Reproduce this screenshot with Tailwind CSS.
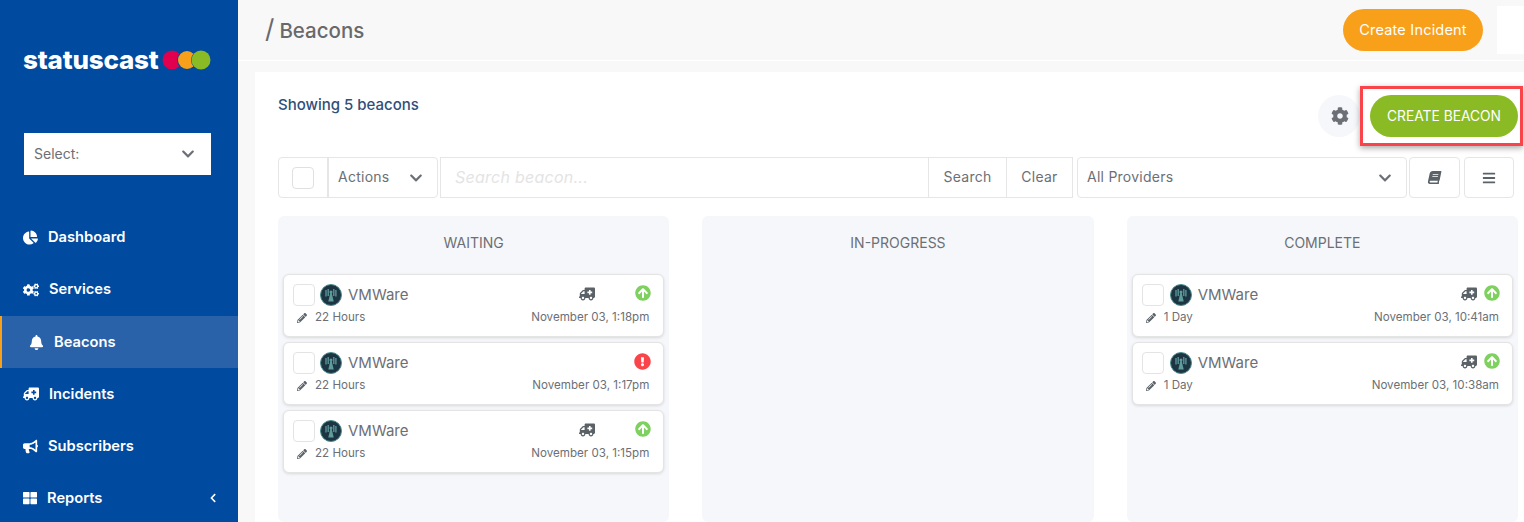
<!DOCTYPE html>
<html lang="en">
<head>
  <meta charset="UTF-8" />
  <title>StatusCast - Beacons</title>
  <script src="https://cdn.jsdelivr.net/npm/@tailwindcss/browser@4"></script>
</head>
<body class="bg-[#f8f8f8] font-['Inter',sans-serif] text-[#6c6f75] overflow-hidden">
  <!-- icon sprite -->
  <svg class="hidden">
    <symbol id="chev-down" viewBox="0 0 448 512"><path d="M207.029 381.476L12.686 187.132c-9.373-9.373-9.373-24.569 0-33.941l22.667-22.667c9.357-9.357 24.522-9.375 33.901-.04L224 284.505l154.745-154.021c9.379-9.335 24.544-9.317 33.901.04l22.667 22.667c9.373 9.373 9.373 24.569 0 33.941L240.971 381.476c-9.373 9.372-24.569 9.372-33.942 0z"/></symbol>
    <symbol id="chev-left" viewBox="0 0 320 512"><path d="M34.52 239.03L228.87 44.69c9.37-9.37 24.57-9.37 33.94 0l22.67 22.67c9.36 9.36 9.37 24.52.04 33.9L131.49 256l154.02 154.75c9.34 9.38 9.32 24.54-.04 33.9l-22.67 22.67c-9.37 9.37-24.57 9.37-33.94 0L34.52 272.97c-9.37-9.37-9.37-24.57 0-33.94z"/></symbol>
    <symbol id="pie" viewBox="0 0 544 512"><path d="M527.79 288H290.5l158.03 158.03c6.04 6.04 15.98 6.53 22.19.68 38.7-36.46 65.32-85.61 73.13-140.86 1.34-9.46-6.51-17.85-16.06-17.85zm-15.83-64.8C503.72 103.74 408.26 8.28 288.8.04 279.68-.59 272 7.1 272 16.24V240h223.77c9.14 0 16.82-7.68 16.19-16.8zM224 288V50.71c0-9.55-8.39-17.4-17.84-16.06C86.99 51.49-4.1 155.6.14 280.37 4.5 408.51 114.83 513.59 243.03 511.98c50.4-.63 96.97-16.87 135.26-44.03 7.9-5.6 8.42-17.23 1.57-24.08L224 288z"/></symbol>
    <symbol id="cogs" viewBox="0 0 640 512"><path d="M512.1 191l-8.2 14.3c-3 5.3-9.4 7.5-15.1 5.4-11.8-4.4-22.6-10.7-32.1-18.6-4.6-3.8-5.8-10.5-2.8-15.7l8.2-14.3c-6.9-8-12.3-17.3-15.9-27.4h-16.5c-6 0-11.2-4.3-12.2-10.3-2-12-2.1-24.6 0-37.1 1-6 6.2-10.4 12.2-10.4h16.5c3.6-10.1 9-19.4 15.9-27.4l-8.2-14.3c-3-5.2-1.9-11.9 2.8-15.7 9.5-7.9 20.4-14.2 32.1-18.6 5.7-2.1 12.1.1 15.1 5.4l8.2 14.3c10.5-1.9 21.2-1.9 31.7 0L552 6.3c3-5.3 9.4-7.5 15.1-5.4 11.8 4.4 22.6 10.7 32.1 18.6 4.6 3.8 5.8 10.5 2.8 15.7l-8.2 14.3c6.9 8 12.3 17.3 15.9 27.4h16.5c6 0 11.2 4.3 12.2 10.3 2 12 2.1 24.6 0 37.1-1 6-6.2 10.4-12.2 10.4h-16.5c-3.6 10.1-9 19.4-15.9 27.4l8.2 14.3c3 5.2 1.9 11.9-2.8 15.7-9.5 7.9-20.4 14.2-32.1 18.6-5.7 2.1-12.1-.1-15.1-5.4l-8.2-14.3c-10.4 1.9-21.2 1.9-31.7 0zm-10.5-58.8c38.5 29.6 82.4-14.3 52.8-52.8-38.5-29.7-82.4 14.3-52.8 52.8zM386.3 286.1l33.7 16.8c10.1 5.8 14.5 18.1 10.5 29.1-8.9 24.2-26.4 46.4-42.6 65.8-7.4 8.9-20.2 11.1-30.3 5.3l-29.1-16.8c-16 13.7-34.6 24.6-54.9 31.7v33.6c0 11.6-8.3 21.6-19.7 23.6-24.6 4.2-50.4 4.4-75.9 0-11.5-2-20-11.9-20-23.6V418c-20.3-7.2-38.9-18-54.9-31.7L74 403c-10 5.8-22.9 3.6-30.3-5.3-16.2-19.4-33.3-41.6-42.2-65.7-4-10.9.4-23.2 10.5-29.1l33.3-16.8c-3.9-20.9-3.9-42.4 0-63.4L12 205.8c-10.1-5.8-14.6-18.1-10.5-29 8.9-24.2 26-46.4 42.2-65.8 7.4-8.9 20.2-11.1 30.3-5.3l29.1 16.8c16-13.7 34.6-24.6 54.9-31.7V57.1c0-11.5 8.2-21.5 19.6-23.5 24.6-4.2 50.5-4.4 76-.1 11.5 2 20 11.9 20 23.6v33.6c20.3 7.2 38.9 18 54.9 31.7l29.1-16.8c10-5.8 22.9-3.6 30.3 5.3 16.2 19.4 33.2 41.6 42.1 65.8 4 10.9.1 23.2-10 29.1l-33.7 16.8c3.9 21 3.9 42.5 0 63.5zm-117.6 21.1c59.2-77-28.7-164.9-105.7-105.7-59.2 77 28.7 164.9 105.7 105.7zm243.4 182.7l-8.2 14.3c-3 5.3-9.4 7.5-15.1 5.4-11.8-4.4-22.6-10.7-32.1-18.6-4.6-3.8-5.8-10.5-2.8-15.7l8.2-14.3c-6.9-8-12.3-17.3-15.9-27.4h-16.5c-6 0-11.2-4.3-12.2-10.3-2-12-2.1-24.6 0-37.1 1-6 6.2-10.4 12.2-10.4h16.5c3.6-10.1 9-19.4 15.9-27.4l-8.2-14.3c-3-5.2-1.9-11.9 2.8-15.7 9.5-7.9 20.4-14.2 32.1-18.6 5.7-2.1 12.1.1 15.1 5.4l8.2 14.3c10.5-1.9 21.2-1.9 31.7 0l8.2-14.3c3-5.3 9.4-7.5 15.1-5.4 11.8 4.4 22.6 10.7 32.1 18.6 4.6 3.8 5.8 10.5 2.8 15.7l-8.2 14.3c6.9 8 12.3 17.3 15.9 27.4h16.5c6 0 11.2 4.3 12.2 10.3 2 12 2.1 24.6 0 37.1-1 6-6.2 10.4-12.2 10.4h-16.5c-3.6 10.1-9 19.4-15.9 27.4l8.2 14.3c3 5.2 1.9 11.9-2.8 15.7-9.5 7.9-20.4 14.2-32.1 18.6-5.7 2.1-12.1-.1-15.1-5.4l-8.2-14.3c-10.4 1.9-21.2 1.9-31.7 0zM501.6 431c38.5 29.6 82.4-14.3 52.8-52.8-38.5-29.6-82.4 14.3-52.8 52.8z"/></symbol>
    <symbol id="bell" viewBox="0 0 448 512"><path d="M224 512c35.32 0 63.97-28.65 63.97-64H160.03c0 35.35 28.65 64 63.97 64zm215.39-149.71c-19.32-20.76-55.47-51.99-55.47-154.29 0-77.7-54.48-139.9-127.94-155.16V32c0-17.67-14.32-32-31.98-32s-31.98 14.33-31.98 32v20.84C118.56 68.1 64.08 130.3 64.08 208c0 102.3-36.15 133.53-55.47 154.29-6 6.45-8.66 14.16-8.61 21.71.11 16.4 12.98 32 32.1 32h383.8c19.12 0 32-15.6 32.1-32 .05-7.55-2.61-15.27-8.61-21.71z"/></symbol>
    <symbol id="ambulance" viewBox="0 0 640 512"><path d="M624 352h-16V243.9c0-12.7-5.1-24.9-14.1-33.9L494 110.1c-9-9-21.2-14.1-33.9-14.1H416V48c0-26.5-21.5-48-48-48H48C21.5 0 0 21.5 0 48v320c0 26.5 21.5 48 48 48h16c0 53 43 96 96 96s96-43 96-96h128c0 53 43 96 96 96s96-43 96-96h48c8.8 0 16-7.2 16-16v-32c0-8.8-7.2-16-16-16zM160 464c-26.5 0-48-21.5-48-48s21.5-48 48-48 48 21.5 48 48-21.5 48-48 48zm144-248c0 4.4-3.6 8-8 8h-56v56c0 4.4-3.6 8-8 8h-48c-4.4 0-8-3.6-8-8v-56h-56c-4.4 0-8-3.6-8-8v-48c0-4.4 3.6-8 8-8h56v-56c0-4.4 3.6-8 8-8h48c4.4 0 8 3.6 8 8v56h56c4.4 0 8 3.6 8 8v48zm176 248c-26.5 0-48-21.5-48-48s21.5-48 48-48 48 21.5 48 48-21.5 48-48 48zm80-208H416V144h44.1l99.9 99.9V256z"/></symbol>
    <symbol id="bullhorn" viewBox="0 0 576 512"><path d="M576 240c0-23.63-12.95-44.04-32-55.12V32.01C544 23.26 537.02 0 512 0c-7.12 0-14.19 2.38-19.98 7.02l-85.03 68.03C364.28 109.19 310.66 128 256 128H64c-35.35 0-64 28.65-64 64v96c0 35.35 28.65 64 64 64h33.7c-1.39 10.48-2.18 21.14-2.18 32 0 39.77 9.26 77.35 25.56 110.94 5.19 10.69 16.52 17.06 28.4 17.06h74.28c26.05 0 41.69-29.84 25.9-50.56-16.4-21.52-26.15-48.36-26.15-77.44 0-11.11 1.62-21.79 4.41-32H256c54.66 0 108.28 18.81 150.98 52.95l85.03 68.03a32.023 32.023 0 0 0 19.98 7.02c24.92 0 32-22.78 32-32V295.13C563.05 284.04 576 263.63 576 240zm-96 141.42l-33.05-26.44C392.95 311.78 325.12 288 256 288v-96c69.12 0 136.95-23.78 190.95-66.98L480 98.58v282.84z"/></symbol>
    <symbol id="grid" viewBox="0 0 512 512"><path d="M296 32h192c13.255 0 24 10.745 24 24v160c0 13.255-10.745 24-24 24H296c-13.255 0-24-10.745-24-24V56c0-13.255 10.745-24 24-24zm-80 0H24C10.745 32 0 42.745 0 56v160c0 13.255 10.745 24 24 24h192c13.255 0 24-10.745 24-24V56c0-13.255-10.745-24-24-24zM0 296v160c0 13.255 10.745 24 24 24h192c13.255 0 24-10.745 24-24V296c0-13.255-10.745-24-24-24H24c-13.255 0-24 10.745-24 24zm296 184h192c13.255 0 24-10.745 24-24V296c0-13.255-10.745-24-24-24H296c-13.255 0-24 10.745-24 24v160c0 13.255 10.745 24 24 24z"/></symbol>
    <symbol id="cog" viewBox="0 0 512 512"><path d="M487.4 315.7l-42.6-24.6c4.3-23.2 4.3-47 0-70.2l42.6-24.6c4.9-2.8 7.1-8.6 5.5-14-11.1-35.6-30-67.8-54.7-94.6-3.8-4.1-10-5.1-14.8-2.3L380.8 110c-17.9-15.4-38.5-27.3-60.8-35.1V25.8c0-5.6-3.9-10.5-9.4-11.7-36.7-8.2-74.3-7.8-109.2 0-5.5 1.2-9.4 6.1-9.4 11.7V75c-22.2 7.9-42.8 19.8-60.8 35.1L88.7 85.5c-4.9-2.8-11-1.9-14.8 2.3-24.7 26.7-43.6 58.9-54.7 94.6-1.7 5.4.6 11.2 5.5 14L67.3 221c-4.3 23.2-4.3 47 0 70.2l-42.6 24.6c-4.9 2.8-7.1 8.6-5.5 14 11.1 35.6 30 67.8 54.7 94.6 3.8 4.1 10 5.1 14.8 2.3l42.6-24.6c17.9 15.4 38.5 27.3 60.8 35.1v49.2c0 5.6 3.9 10.5 9.4 11.7 36.7 8.2 74.3 7.8 109.2 0 5.5-1.2 9.4-6.1 9.4-11.7v-49.2c22.2-7.9 42.8-19.8 60.8-35.1l42.6 24.6c4.9 2.8 11 1.9 14.8-2.3 24.7-26.7 43.6-58.9 54.7-94.6 1.5-5.5-.7-11.3-5.6-14.1zM256 336c-44.1 0-80-35.9-80-80s35.9-80 80-80 80 35.9 80 80-35.9 80-80 80z"/></symbol>
    <symbol id="book" viewBox="0 0 448 512"><path d="M448 360V24c0-13.3-10.7-24-24-24H96C43 0 0 43 0 96v320c0 53 43 96 96 96h328c13.3 0 24-10.7 24-24v-16c0-7.5-3.5-14.3-8.9-18.7-4.2-15.4-4.2-59.3 0-74.7 5.4-4.3 8.9-11.1 8.9-18.6zM128 134c0-3.3 2.7-6 6-6h212c3.3 0 6 2.7 6 6v20c0 3.3-2.7 6-6 6H134c-3.3 0-6-2.7-6-6v-20zm0 64c0-3.3 2.7-6 6-6h212c3.3 0 6 2.7 6 6v20c0 3.3-2.7 6-6 6H134c-3.3 0-6-2.7-6-6v-20zm253.4 250H96c-17.7 0-32-14.3-32-32 0-17.6 14.4-32 32-32h285.4c-1.9 17.1-1.9 46.9 0 64z"/></symbol>
    <symbol id="bars" viewBox="0 0 448 512"><path d="M16 132h416c8.837 0 16-7.163 16-16V76c0-8.837-7.163-16-16-16H16C7.163 60 0 67.163 0 76v40c0 8.837 7.163 16 16 16zm0 160h416c8.837 0 16-7.163 16-16v-40c0-8.837-7.163-16-16-16H16c-8.837 0-16 7.163-16 16v40c0 8.837 7.163 16 16 16zm0 160h416c8.837 0 16-7.163 16-16v-40c0-8.837-7.163-16-16-16H16c-8.837 0-16 7.163-16 16v40c0 8.837 7.163 16 16 16z"/></symbol>
    <symbol id="pencil" viewBox="0 0 512 512"><path d="M497.9 142.1l-46.1 46.1c-4.7 4.7-12.3 4.7-17 0l-111-111c-4.7-4.7-4.7-12.3 0-17l46.1-46.1c18.7-18.7 49.1-18.7 67.9 0l60.1 60.1c18.8 18.7 18.8 49.1 0 67.9zM284.2 99.8L21.6 362.4.4 483.9c-2.9 16.4 11.4 30.6 27.8 27.8l121.5-21.3 262.6-262.6c4.7-4.7 4.7-12.3 0-17l-111-111c-4.8-4.7-12.4-4.7-17.1 0zM124.1 339.9c-5.5-5.5-5.5-14.3 0-19.8l154-154c5.5-5.5 14.3-5.5 19.8 0s5.5 14.3 0 19.8l-154 154c-5.5 5.5-14.3 5.5-19.8 0zM88 424h48v36.3l-64.5 11.3-31.1-31.1L51.7 376H88v48z"/></symbol>
    <symbol id="arrow-up" viewBox="0 0 512 512"><path d="M8 256C8 119 119 8 256 8s248 111 248 248-111 248-248 248S8 393 8 256zm143.6 28.9l72.4-75.5V392c0 13.3 10.7 24 24 24h16c13.3 0 24-10.7 24-24V209.4l72.4 75.5c9.3 9.7 24.8 9.9 34.3.4l10.9-11c9.4-9.4 9.4-24.6 0-33.9L273 107.7c-9.4-9.4-24.6-9.4-33.9 0L106.3 240.4c-9.4 9.4-9.4 24.6 0 33.9l10.9 11c9.6 9.5 25.1 9.3 34.4-.4z"/></symbol>
    <symbol id="alert" viewBox="0 0 512 512"><path d="M504 256c0 136.997-111.043 248-248 248S8 392.997 8 256C8 119.083 119.043 8 256 8s248 111.083 248 248zm-248 50c-25.405 0-46 20.595-46 46s20.595 46 46 46 46-20.595 46-46-20.595-46-46-46zm-43.673-165.346l7.418 136c.347 6.364 5.609 11.346 11.982 11.346h48.546c6.373 0 11.635-4.982 11.982-11.346l7.418-136c.375-6.874-5.098-12.654-11.982-12.654h-63.383c-6.884 0-12.356 5.78-11.981 12.654z"/></symbol>
    <symbol id="vmware" viewBox="0 0 22 22"><circle cx="11" cy="11" r="10.5" fill="#1d3443" stroke="#4f8f8f" stroke-width="1"/><path d="M10.3 9h1.4l2 8.5h-5.4z" fill="#5f9c9c"/><path d="M6 6v6.5M8.2 5v7M15.9 6v6.5M13.8 5v7" stroke="#5f9c9c" stroke-width="1.3" fill="none"/><circle cx="11" cy="8" r="1.5" fill="#5f9c9c"/></symbol>
  </svg>

  <div class="flex h-[522px] w-[1524px]">
    <!-- Sidebar -->
    <aside class="w-[238px] shrink-0 bg-[#004a9f] text-white">
      <div class="flex h-[120px] items-center pl-6">
        <span class="-ml-[1px] text-[26px] font-extrabold tracking-[-0.2px] leading-none">statuscast</span>
        <svg class="ml-[4px] h-5 w-[49px]" viewBox="0 0 49 20">
          <circle cx="10" cy="10" r="9.5" fill="#e0004d"/>
          <circle cx="25" cy="10" r="10" fill="#004a9f"/>
          <circle cx="25" cy="10" r="9" fill="#f9a01b"/>
          <circle cx="39" cy="10" r="10" fill="#004a9f"/>
          <circle cx="39" cy="10" r="9.5" fill="#8abb24"/>
        </svg>
      </div>
      <div class="ml-6 mt-[13px] flex h-[42px] w-[187px] items-center justify-between bg-white pl-[10px] pr-[16px] text-sm text-[#6c6f75]">
        <span>Select:</span>
        <svg class="size-[14px] fill-[#6c6f75]"><use href="#chev-down"/></svg>
      </div>
      <nav class="mt-[36px] text-[14.7px] font-semibold">
        <a class="flex h-[52px] items-center pl-[23px]"><svg class="mr-[10px] size-[15px] fill-white"><use href="#pie"/></svg>Dashboard</a>
        <a class="flex h-[53px] items-center pl-[23px]"><svg class="mr-[10px] size-[16px] fill-white"><use href="#cogs"/></svg>Services</a>
        <a class="flex h-[52px] items-center border-l-2 border-[#f9a01b] bg-[#2a62a9] pl-[27px]"><svg class="mr-[10px] size-[15px] fill-white"><use href="#bell"/></svg>Beacons</a>
        <a class="flex h-[52px] items-center pl-[23px]"><svg class="mr-[10px] size-[16px] -scale-x-100 fill-white"><use href="#ambulance"/></svg>Incidents</a>
        <a class="flex h-[52px] items-center pl-[23px]"><svg class="mr-[10px] size-[15px] fill-white"><use href="#bullhorn"/></svg>Subscribers</a>
        <a class="flex h-[52px] items-center pl-[23px]"><svg class="mr-[10px] size-[14px] fill-white"><use href="#grid"/></svg>Reports<svg class="ml-auto mr-[20px] size-[10px] fill-white"><use href="#chev-left"/></svg></a>
      </nav>
    </aside>

    <!-- Main -->
    <main class="min-w-0 flex-1">
      <header class="flex h-[61px] items-center border-b border-white pl-[27px]">
        <h1 class="pb-[4px] text-[20.5px] font-medium text-[#68696c]"><span class="mr-[5px] text-[26px] font-normal">/</span>Beacons</h1>
        <button class="ml-auto flex h-[42px] w-[140px] items-center justify-center rounded-full bg-[#f9a01b] text-[14.5px] tracking-[0.2px] text-white">Create Incident</button>
        <div class="ml-[14px] h-[48px] w-[27px] bg-white"></div>
      </header>

      <section class="relative ml-[17px] mt-[11px] h-[450px] bg-white pl-[23px] pr-[6px]">
        <div class="flex h-[85px] items-start">
          <p class="mt-[22px] text-[15px] font-medium text-[#2f5079]">Showing 5 beacons</p>
          <button class="ml-auto mt-[23px] flex size-[42px] items-center justify-center rounded-full bg-[#f5f7fa] pl-[2px]"><svg class="size-[18px] fill-[#6c6f75]"><use href="#cog"/></svg></button>
          <button class="ml-[10px] mt-[23px] h-[42px] w-[148px] rounded-full bg-[#8abb24] text-[13.8px] text-white">CREATE BEACON</button>
        </div>
        <!-- red highlight round the create button -->
        <div class="absolute left-[1105px] top-[14px] h-[60px] w-[163px] border-[3px] border-[#f94449] shadow-[0_2px_6px_rgba(0,0,0,0.35)]"></div>

        <div class="flex h-[41px] text-sm tracking-[0.25px]">
          <div class="flex w-[160px] rounded border border-[#e6e6e6] bg-white">
            <div class="flex w-[50px] items-center justify-center border-r-2 border-[#e6e6e6]"><span class="size-[22px] rounded border border-[#e0e0e0]"></span></div>
            <div class="flex flex-1 items-center justify-between pb-[2px] pl-[9px] pr-[14px]">Actions<svg class="mt-[2px] size-[14px] fill-[#6c6f75]"><use href="#chev-down"/></svg></div>
          </div>
          <div class="ml-[2px] flex w-[633px] border border-[#e6e6e6]">
            <div class="flex flex-1 items-center pb-[1px] pl-[14px] text-base italic text-[#e4e4e4]">Search beacon...</div>
            <div class="flex w-[78px] items-center justify-center border-l border-[#e6e6e6] pb-[2px]">Search</div>
            <div class="flex w-[66px] items-center justify-center border-l border-[#e6e6e6] pb-[2px]">Clear</div>
          </div>
          <div class="ml-[4px] flex w-[330px] items-center justify-between rounded border border-[#e6e6e6] pb-[2px] pl-[9px] pr-[14px]">All Providers<svg class="mt-[2px] size-[14px] fill-[#6c6f75]"><use href="#chev-down"/></svg></div>
          <div class="ml-[2px] flex w-[51px] items-center justify-center rounded border border-[#e6e6e6]"><svg class="size-[13px] -skew-x-12 fill-[#5a6268]"><use href="#book"/></svg></div>
          <div class="ml-[4px] flex w-[50px] items-center justify-center rounded border border-[#e6e6e6]"><svg class="size-[14px] fill-[#5a6268]"><use href="#bars"/></svg></div>
        </div>

        <!-- Board -->
        <div class="mt-[18px] grid w-[1240px] grid-cols-3 gap-x-[33px]">
          <div class="h-[306px] rounded-md bg-[#f5f7fa] px-[5px]">
            <h2 class="flex h-[58px] items-center justify-center pb-[4px] text-sm">WAITING</h2>
            <div class="flex flex-col gap-[5px]">
              <article class="h-[63px] rounded-md border border-[#e4e4e4] bg-white px-[9px] pt-[9px] shadow-[0_1px_3px_rgba(0,0,0,0.12)]">
                <div class="flex h-[22px] items-center">
                  <span class="size-[22px] rounded border border-[#e4e4e4]"></span>
                  <svg class="ml-[5px] size-[22px]"><use href="#vmware"/></svg>
                  <span class="ml-[6px] text-[15px]">VMWare</span>
                  <svg class="ml-auto mb-[2px] size-[16px] -scale-x-100 fill-[#5a6268]"><use href="#ambulance"/></svg>
                  <svg class="mb-[4px] ml-[40px] mr-[3px] size-[16px] fill-[#7ed05f]"><use href="#arrow-up"/></svg>
                </div>
                <div class="mt-[3px] flex items-center text-[11.6px]">
                  <svg class="ml-[4px] mr-[8px] size-[10px] fill-[#5a6268]"><use href="#pencil"/></svg>22 Hours
                  <span class="ml-auto mr-[5px]">November 03, 1:18pm</span>
                </div>
              </article>
              <article class="h-[63px] rounded-md border border-[#e4e4e4] bg-white px-[9px] pt-[9px] shadow-[0_1px_3px_rgba(0,0,0,0.12)]">
                <div class="flex h-[22px] items-center">
                  <span class="size-[22px] rounded border border-[#e4e4e4]"></span>
                  <svg class="ml-[5px] size-[22px]"><use href="#vmware"/></svg>
                  <span class="ml-[6px] text-[15px]">VMWare</span>
                  <svg class="mb-[4px] ml-auto mr-[3px] size-[17px] fill-[#f94449]"><use href="#alert"/></svg>
                </div>
                <div class="mt-[3px] flex items-center text-[11.6px]">
                  <svg class="ml-[4px] mr-[8px] size-[10px] fill-[#5a6268]"><use href="#pencil"/></svg>22 Hours
                  <span class="ml-auto mr-[5px]">November 03, 1:17pm</span>
                </div>
              </article>
              <article class="h-[63px] rounded-md border border-[#e4e4e4] bg-white px-[9px] pt-[9px] shadow-[0_1px_3px_rgba(0,0,0,0.12)]">
                <div class="flex h-[22px] items-center">
                  <span class="size-[22px] rounded border border-[#e4e4e4]"></span>
                  <svg class="ml-[5px] size-[22px]"><use href="#vmware"/></svg>
                  <span class="ml-[6px] text-[15px]">VMWare</span>
                  <svg class="ml-auto mb-[2px] size-[16px] -scale-x-100 fill-[#5a6268]"><use href="#ambulance"/></svg>
                  <svg class="mb-[4px] ml-[40px] mr-[3px] size-[16px] fill-[#7ed05f]"><use href="#arrow-up"/></svg>
                </div>
                <div class="mt-[3px] flex items-center text-[11.6px]">
                  <svg class="ml-[4px] mr-[8px] size-[10px] fill-[#5a6268]"><use href="#pencil"/></svg>22 Hours
                  <span class="ml-auto mr-[5px]">November 03, 1:15pm</span>
                </div>
              </article>
            </div>
          </div>

          <div class="h-[306px] rounded-md bg-[#f5f7fa] px-[5px]">
            <h2 class="flex h-[58px] items-center justify-center pb-[4px] text-sm">IN-PROGRESS</h2>
          </div>

          <div class="h-[306px] rounded-md bg-[#f5f7fa] px-[5px]">
            <h2 class="flex h-[58px] items-center justify-center pb-[4px] text-sm">COMPLETE</h2>
            <div class="flex flex-col gap-[5px]">
              <article class="h-[63px] rounded-md border border-[#e4e4e4] bg-white px-[9px] pt-[9px] shadow-[0_1px_3px_rgba(0,0,0,0.12)]">
                <div class="flex h-[22px] items-center">
                  <span class="size-[22px] rounded border border-[#e4e4e4]"></span>
                  <svg class="ml-[6px] size-[22px]"><use href="#vmware"/></svg>
                  <span class="ml-[6px] text-[15px]">VMWare</span>
                  <svg class="ml-auto mb-[2px] size-[16px] -scale-x-100 fill-[#5a6268]"><use href="#ambulance"/></svg>
                  <svg class="mb-[4px] ml-[7px] mr-[3px] size-[16px] fill-[#7ed05f]"><use href="#arrow-up"/></svg>
                </div>
                <div class="mt-[3px] flex items-center text-[11.6px]">
                  <svg class="ml-[4px] mr-[8px] size-[10px] fill-[#5a6268]"><use href="#pencil"/></svg>1 Day
                  <span class="ml-auto mr-[4px]">November 03, 10:41am</span>
                </div>
              </article>
              <article class="h-[63px] rounded-md border border-[#e4e4e4] bg-white px-[9px] pt-[9px] shadow-[0_1px_3px_rgba(0,0,0,0.12)]">
                <div class="flex h-[22px] items-center">
                  <span class="size-[22px] rounded border border-[#e4e4e4]"></span>
                  <svg class="ml-[6px] size-[22px]"><use href="#vmware"/></svg>
                  <span class="ml-[6px] text-[15px]">VMWare</span>
                  <svg class="ml-auto mb-[2px] size-[16px] -scale-x-100 fill-[#5a6268]"><use href="#ambulance"/></svg>
                  <svg class="mb-[4px] ml-[7px] mr-[3px] size-[16px] fill-[#7ed05f]"><use href="#arrow-up"/></svg>
                </div>
                <div class="mt-[3px] flex items-center text-[11.6px]">
                  <svg class="ml-[4px] mr-[8px] size-[10px] fill-[#5a6268]"><use href="#pencil"/></svg>1 Day
                  <span class="ml-auto mr-[4px]">November 03, 10:38am</span>
                </div>
              </article>
            </div>
          </div>
        </div>
      </section>
    </main>
  </div>
</body>
</html>
